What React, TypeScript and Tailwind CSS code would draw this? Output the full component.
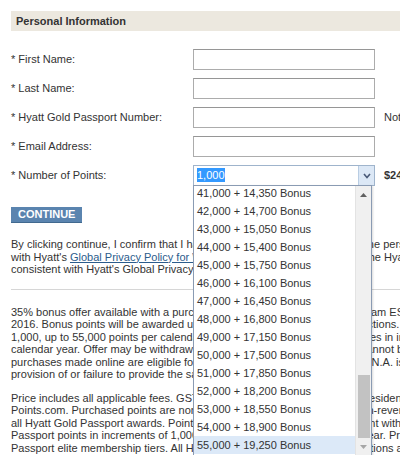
import type { ReactNode } from "react";

const fields = [
  { label: "* First Name:" },
  { label: "* Last Name:" },
  { label: "* Hyatt Gold Passport Number:", note: "Not a member? Join now" },
  { label: "* Email Address:" },
];

// 41,000 .. 55,000 points, 35% bonus on each
const options = Array.from({ length: 15 }, (_, i) => {
  const k = 41 + i;
  const bonus = k * 350;
  const b = `${Math.floor(bonus / 1000)},${String(bonus % 1000).padStart(3, "0")}`;
  return `${k},000 + ${b} Bonus`;
});

function Lines({ lines }: { lines: ReactNode[] }) {
  return (
    <p className="leading-[12.5px] whitespace-nowrap">
      {lines.map((line, i) => (
        <span key={i} className="block">
          {line}
        </span>
      ))}
    </p>
  );
}

function Triangle({ up, color }: { up?: boolean; color: string }) {
  return (
    <svg width="7" height="4" viewBox="0 0 7 4">
      <path d={up ? "M0 4 L3.5 0 L7 4 Z" : "M0 0 L3.5 4 L7 0 Z"} fill={color} />
    </svg>
  );
}

function PointsSelect() {
  return (
    <div className="relative">
      <div className="flex h-[21px] w-[182px] items-center border border-[#9fb4cc] bg-white">
        <div className="flex-1 pl-[3px]">
          <span className="bg-[#3399ff] py-[1px] text-white">1,000</span>
        </div>
        <div className="flex h-full w-[16px] items-center justify-center border-l border-[#b9cde3] bg-[#dce8f6]">
          <svg width="8" height="6" viewBox="0 0 8 6">
            <path d="M1 1 L4 4.5 L7 1" fill="none" stroke="#4a5a78" strokeWidth="1.6" />
          </svg>
        </div>
      </div>

      <div className="absolute left-0 top-[20px] z-10 flex h-[272px] w-[179px] overflow-hidden border border-[#8a9bb3] bg-white shadow-[1px_1px_2px_rgba(0,0,0,0.15)]">
        <ul className="-mt-[2px] flex-1">
          {options.map((o, i) => (
            <li
              key={o}
              className={`flex h-[18px] items-center pl-[3px] ${
                i === options.length - 1 ? "bg-[#dce9f8]" : ""
              }`}
            >
              {o}
            </li>
          ))}
        </ul>
        <div className="flex w-[16px] flex-col items-center border-l border-[#e3e3e3] bg-[#f0f0f0]">
          <div className="flex h-[17px] items-center">
            <Triangle up color="#606060" />
          </div>
          <div className="mt-[172px] h-[63px] w-[12px] bg-[#c2c2c2]" />
          <div className="flex h-[17px] items-center">
            <Triangle color="#a6a6a6" />
          </div>
        </div>
      </div>
    </div>
  );
}

export default function App() {
  return (
    <div className="h-[455px] w-[400px] overflow-hidden bg-white font-['Liberation_Sans',Arial,sans-serif] text-[11px] text-[#333]">
      <div className="w-[600px] pl-[11px] pt-[11px]">
        <div className="flex h-[20px] items-center bg-[#ece8df] pl-[5px] font-bold">
          Personal Information
        </div>

        <div className="mt-[18px] flex flex-col gap-[8px]">
          {fields.map((f) => (
            <div key={f.label} className="flex h-[21px] items-center">
              <label className="w-[182px]">{f.label}</label>
              <input className="h-[21px] w-[182px] border border-[#acacac] border-t-[#969696] bg-white" />
              {f.note && <span className="ml-[9px]">{f.note}</span>}
            </div>
          ))}
          <div className="flex h-[21px] items-center">
            <label className="w-[182px]">* Number of Points:</label>
            <PointsSelect />
            <span className="ml-[9px] font-bold">$240.00 USD</span>
          </div>
        </div>

        <button className="mt-[21px] block h-[16px] border-b border-[#41698f] bg-[#5a84af] px-[7px] text-[11px] leading-[15px] font-bold text-white">
          CONTINUE
        </button>

        <div className="mt-[15px]">
          <Lines
            lines={[
              "By clicking continue, I confirm that I have read all Terms and Conditions; the personal information I provide",
              <>
                with Hyatt's{" "}
                <a className="text-[#2b5c8c] underline">Global Privacy Policy for Websites</a> is shared
                with Points and the Hyatt affiliates
              </>,
              "consistent with Hyatt's Global Privacy Policy.",
            ]}
          />
        </div>

        <div className="mt-[13px] h-px bg-[#d6d6d6]" />

        <div className="mt-[16px]">
          <Lines
            lines={[
              "35% bonus offer available with a purchase of points made between 12:00 am EST December 1, 2015 to",
              "2016. Bonus points will be awarded upon purchase and seen in all transactions. Offer valid",
              "1,000, up to 55,000 points per calendar year. Bonus applies to all purchases in increments of",
              "calendar year. Offer may be withdrawn at any time. These bonus points cannot be transferred. Only",
              "purchases made online are eligible for this offer and Hyatt Hotels Corp. of N.A. is not responsible for",
              "provision of or failure to provide the said bonus.",
            ]}
          />
        </div>

        <div className="mt-[11px]">
          <Lines
            lines={[
              "Price includes all applicable fees. GST/HST will be charged to Canadian residents.",
              "Points.com. Purchased points are non-refundable, are all final and are non-reversible and",
              "all Hyatt Gold Passport awards. Points must be used for rewards consistent with",
              "Passport points in increments of 1,000 up to 55,000 points per calendar year. Price",
              "Passport elite membership tiers. All Hyatt Gold Passport Terms and Conditions apply.",
            ]}
          />
        </div>
      </div>
    </div>
  );
}
